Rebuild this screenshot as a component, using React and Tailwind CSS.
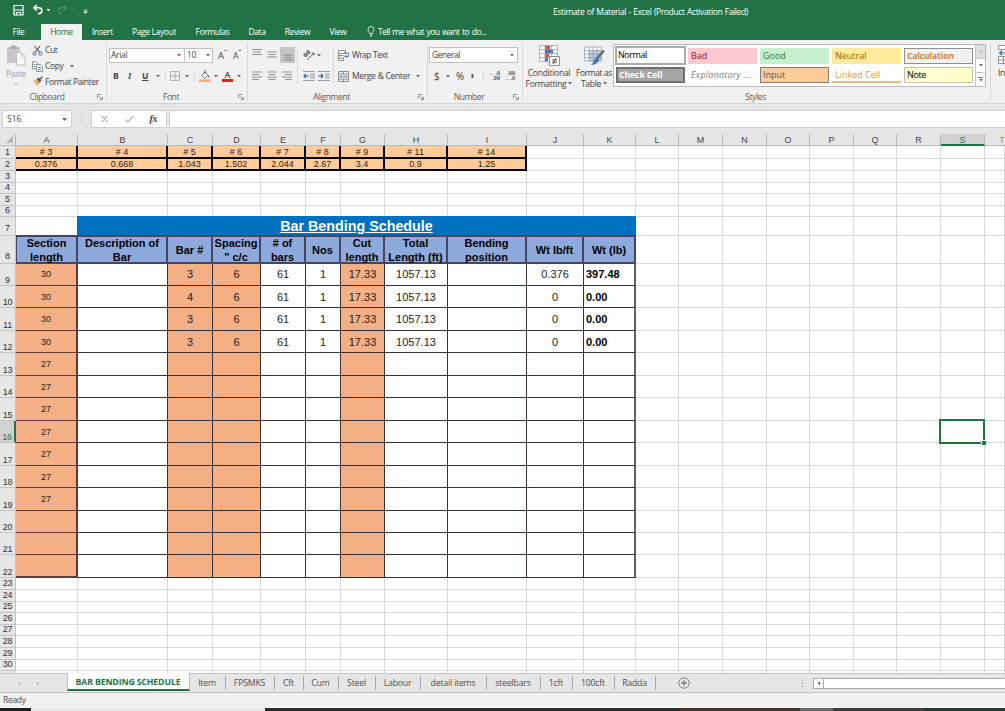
import React from "react";

const COLS =
  "grid grid-rows-[minmax(0,1fr)] grid-cols-[16px_62px_90px_45px_48px_45px_35px_44px_63px_79px_57px_52px_43px_44px_44px_43px_44px_43px_44px_44px_20px]";
const LETTERS = "ABCDEFGHIJKLMNOPQRST".split("");

const H = {
  11: "h-[11px]",
  12: "h-[12px]",
  13: "h-[13px]",
  19: "h-[19px]",
  22: "h-[22px]",
  23: "h-[23px]",
  28: "h-[28px]",
};
const HEIGHTS = [
  13, 12, 12, 11, 12, 11, 19, 28, 22, 22, 23, 22, 23, 22, 23, 22, 23, 22, 23,
  22, 22, 23, 12, 12, 11, 12, 11, 12, 12, 11,
];

const SIZES = ["# 3", "# 4", "# 5", "# 6", "# 7", "# 8", "# 9", "# 11", "# 14"];
const WEIGHTS = ["0.376", "0.668", "1.043", "1.502", "2.044", "2.67", "3.4", "0.9", "1.25"];
const HEADS = [
  ["Section", "length"],
  ["Description of", "Bar"],
  ["Bar #"],
  ["Spacing", "\" c/c"],
  ["# of", "bars"],
  ["Nos"],
  ["Cut", "length"],
  ["Total", "Length (ft)"],
  ["Bending", "position"],
  ["Wt lb/ft"],
  ["Wt (lb)"],
];
const DATA = {
  9: ["30", "", "3", "6", "61", "1", "17.33", "1057.13", "", "0.376", "397.48"],
  10: ["30", "", "4", "6", "61", "1", "17.33", "1057.13", "", "0", "0.00"],
  11: ["30", "", "3", "6", "61", "1", "17.33", "1057.13", "", "0", "0.00"],
  12: ["30", "", "3", "6", "61", "1", "17.33", "1057.13", "", "0", "0.00"],
};

function Caret({ className = "" }) {
  return (
    <svg viewBox="0 0 5 3" className={`h-[2.500px] w-[4px] shrink-0 text-[#666] ${className}`}>
      <path d="M0 0h5L2.5 3z" fill="currentColor" />
    </svg>
  );
}

function Launcher() {
  return (
    <svg viewBox="0 0 6 6" className="h-[6px] w-[6px] shrink-0" fill="none" stroke="#777" strokeWidth="0.8">
      <path d="M0.5 4V0.5H4M2.3 2.3L5 5M5.4 2.8v2.7H2.7" />
    </svg>
  );
}

function Group({ className, label, launcher = true, children }) {
  return (
    <div className={`flex shrink-0 flex-col ${className}`}>
      <div className="h-[51px]">{children}</div>
      <div className="grid h-[12px] grid-cols-[1fr_9px] items-center">
        <span
          className={`pr-[3px] text-center text-[8.500px] leading-[12px] tracking-[-0.38px] text-[#5c5c5c] ${launcher ? "" : "pl-[10px]"}`}
        >
          {label}
        </span>
        {launcher ? <Launcher /> : <span />}
      </div>
    </div>
  );
}

function Sep({ className = "" }) {
  return <div className={`w-px shrink-0 bg-[#d8d8d8] ${className}`} />;
}

function Lines({ rows, className = "" }) {
  return (
    <svg viewBox="0 0 10 10" className={`h-[10px] w-[10px] shrink-0 ${className}`} stroke="#858585" strokeWidth="0.9">
      {rows.map(([x1, x2, y]) => (
        <path key={y} d={`M${x1} ${y}H${x2}`} />
      ))}
    </svg>
  );
}

function Indent({ out }) {
  return (
    <svg viewBox="0 0 12 10" className="h-[10px] w-[12px] shrink-0" fill="none" stroke="#888" strokeWidth="0.8">
      <path d="M0 .5h12M7 3h5M7 5h5M7 7h5M0 9.5h12" />
      <path d={out ? "M6 5H1M3 3L1 5l2 2" : "M0 5h5M3 3l2 2-2 2"} stroke="#2b6da8" strokeWidth="1.2" />
    </svg>
  );
}

function TitleBar() {
  return (
    <div className="flex h-[24px] bg-[#217346] text-white">
      <svg viewBox="0 0 100 24" className="h-[24px] w-[100px] shrink-0" fill="none">
        <g stroke="#fff">
          <path d="M14 5.500h9v9.500h-9z" strokeWidth="1.200" />
          <path d="M14.500 10h8M16.500 15v-2.500h4V15" strokeWidth="1.200" />
          <path d="M36.800 5L34 7.800l2.800 2.800M34.300 7.800h4.600a2.900 2.900 0 0 1 0 5.800H38" strokeWidth="1.600" />
        </g>
        <path d="M46.500 9h4l-2 2.300z" fill="#fff" />
        <g stroke="#4b8a68">
          <path d="M63.500 5l2.800 2.800-2.800 2.800M66 7.800h-4.600a2.900 2.900 0 0 0 0 5.800h.8" strokeWidth="1.400" />
        </g>
        <path d="M70.500 9h3.600l-1.800 2z" fill="#4b8a68" />
        <path d="M83.500 10h4M83.800 11.800h3.400l-1.700 1.700z" stroke="#fff" strokeWidth="0.7" fill="#fff" />
      </svg>
      <div className="ml-[453px] text-[8.500px] leading-[24px] tracking-[-0.38px] [word-spacing:0.6px] whitespace-nowrap">
        Estimate of Material - Excel (Product Activation Failed)
      </div>
    </div>
  );
}

function RibbonTabs() {
  const tabs = [
    ["Insert", "w-[41px]"],
    ["Page Layout", "w-[62px]"],
    ["Formulas", "w-[55px]"],
    ["Data", "w-[34px]"],
    ["Review", "w-[47px]"],
    ["View", "w-[34px]"],
  ];
  return (
    <div className="flex h-[16px] bg-[#217346] text-center text-[8.500px] leading-[15px] tracking-[-0.36px] text-white">
      <div className="w-[41px] pr-[4px]">File</div>
      <div className="w-[41px] bg-[#f1f1f1] text-[#217346]">Home</div>
      {tabs.map(([t, w]) => (
        <div key={t} className={`whitespace-nowrap ${w}`}>
          {t}
        </div>
      ))}
      <svg viewBox="0 0 8 11" className="mt-[2px] ml-[12px] h-[11px] w-[8px]" fill="none" stroke="#fff" strokeWidth="0.8">
        <path d="M2.6 7.5C2.6 6 1 5.300 1 3.500a3 3 0 0 1 6 0C7 5.300 5.400 6 5.400 7.500zM2.700 9h2.600M3.200 10.300h1.600" />
      </svg>
      <div className="ml-[3px] tracking-[-0.48px] [word-spacing:0.7px] whitespace-nowrap">
        Tell me what you want to do...
      </div>
    </div>
  );
}

function Clipboard() {
  return (
    <Group className="w-[106px]" label="Clipboard">
      <div className="flex">
        <div className="flex w-[32px] flex-col items-center pt-[4px] text-[8.500px] tracking-[-0.3px] text-[#a0a0a0]">
          <svg viewBox="0 0 20 22" className="h-[22px] w-[20px]">
            <path d="M1 3h13v16H1z" fill="#c9c5cb" />
            <path d="M4 5V2.500h2a1.500 1.500 0 0 1 3 0h2V5z" fill="#aaa4ae" />
            <path d="M10.500 8.500h5l3.500 3.500v9h-8.500z" fill="#f7f7f7" stroke="#b5b5b5" strokeWidth="0.8" />
            <path d="M15.500 8.500V12H19" fill="none" stroke="#b5b5b5" strokeWidth="0.8" />
          </svg>
          <span className="leading-[15px]">Paste</span>
          <Caret className="mt-[2px] !text-[#c4c4c4]" />
        </div>
        <div className="flex flex-col pt-[2px] text-[8.500px] leading-[16px] tracking-[-0.4px] text-[#444]">
          <div className="flex h-[16px] items-center">
            <svg viewBox="0 0 11 11" className="mr-[2px] h-[11px] w-[11px]" fill="none">
              <path d="M2.500 1l5 6M8 1L3.500 7" stroke="#555" strokeWidth="1.1" />
              <circle cx="2.500" cy="8.500" r="1.600" stroke="#2b6da8" />
              <circle cx="8.500" cy="8.500" r="1.600" stroke="#2b6da8" />
            </svg>
            Cut
          </div>
          <div className="flex h-[16px] items-center">
            <svg viewBox="0 0 11 11" className="mr-[2px] h-[11px] w-[11px]" fill="#fff" stroke="#777" strokeWidth="0.8">
              <path d="M.5.8h3.500L6 2.800v5H.5z" />
              <path d="M4.500 3.500h3.800l2.200 2.200v4.800h-6z" />
              <path d="M1.500 3.500h2M1.500 5.500h2M6 6.500h3M6 8.500h3" stroke="#2b6da8" />
            </svg>
            Copy
            <Caret className="ml-[7px]" />
          </div>
          <div className="flex h-[15px] items-center whitespace-nowrap">
            <svg viewBox="0 0 11 11" className="mr-[2px] h-[11px] w-[11px]">
              <path d="M1 4.500l4-1 3 3L5.500 10z" fill="#e8b56a" />
              <path d="M4.500 3l2-1.500 3 3-1.800 2z" fill="#555" />
              <path d="M7.500 3.500L10.500.8" stroke="#555" strokeWidth="1.500" />
            </svg>
            Format Painter
          </div>
        </div>
      </div>
    </Group>
  );
}

function FontGroup() {
  return (
    <Group className="w-[140px]" label="Font">
      <div className="pt-[8px]">
        <div className="flex h-[15px] pl-[2px] text-[8.500px] tracking-[-0.3px] text-[#444]">
          <div className="flex w-[76px] items-center justify-between border border-[#c0c0c0] bg-white pr-[3px] pl-[1px]">
            Arial <Caret />
          </div>
          <div className="-ml-px flex w-[29px] items-center justify-between border border-[#c0c0c0] bg-white px-[2px]">
            10 <Caret />
          </div>
          <div className="ml-[5px] w-[15px] text-[9.500px] leading-[15px]">
            A<span className="align-top text-[7px] leading-[9px] font-bold">ˆ</span>
          </div>
          <div className="text-[8.500px] leading-[16px]">
            A<span className="align-top text-[7px] leading-[9px] font-bold">ˇ</span>
          </div>
        </div>
        <div className="mt-[6px] flex h-[14px] items-center pl-[6px] text-[8.500px] leading-[14px] text-[#444]">
          <b className="w-[15px]">B</b>
          <i className="w-[14px] font-['Liberation_Serif',serif] font-bold">I</i>
          <span className="w-[13px] font-bold underline">U</span>
          <Caret className="ml-px" />
          <Sep className="ml-[5px] h-[12px]" />
          <svg viewBox="0 0 10 10" className="ml-[4px] h-[10px] w-[10px]" fill="none" stroke="#999" strokeWidth="0.7">
            <path d="M.5.500h9v9h-9zM5 .5v9M.5 5h9" />
          </svg>
          <Caret className="ml-[5px]" />
          <Sep className="ml-[5px] h-[12px]" />
          <svg viewBox="0 0 12 12" className="ml-[4px] h-[12px] w-[12px]">
            <path d="M2.500 5.500L6 2l3 3.500L5.800 8.500z" fill="#fff" stroke="#666" strokeWidth="0.9" />
            <path d="M5 3.500V1.500a1 1 0 0 1 2 0v2" fill="none" stroke="#666" strokeWidth="0.7" />
            <path d="M9 5c1.500 1 1.500 2 1 3-.8-.5-1-1.500-1-3z" fill="#2b6da8" />
            <path d="M0 9.300h11.500V12H0z" fill="#f4b084" />
          </svg>
          <Caret className="ml-[3px]" />
          <div className="ml-[4px] flex w-[11px] flex-col items-center">
            <span className="h-[9px] text-[9px] leading-[9px] font-semibold">A</span>
            <span className="h-[3px] w-[11px] bg-[#e02020]" />
          </div>
          <Caret className="ml-[4px]" />
        </div>
      </div>
    </Group>
  );
}

function Alignment() {
  return (
    <Group className="w-[179px]" label="Alignment">
      <div className="flex pt-[5px]">
        <div className="flex w-[49px] flex-col">
          <div className="flex h-[20px] pl-[4px]">
            <Lines className="mt-[4px]" rows={[[0, 10, 0.5], [1.5, 8.5, 3], [0, 10, 5.5]]} />
            <Lines className="mt-[5px] ml-[5px]" rows={[[0, 10, 2], [1.5, 8.5, 4.5], [0, 10, 7]]} />
            <div className="mt-[2px] ml-[3px] flex h-[16px] w-[15px] items-end justify-center bg-[#c6c6c6]">
              <Lines className="mb-px" rows={[[0, 10, 3], [1.5, 8.5, 5.5], [0, 10, 8]]} />
            </div>
          </div>
          <div className="mt-[6px] flex gap-[5px] pl-[4px]">
            <Lines rows={[[0, 10, 1], [0, 7, 3.5], [0, 10, 6], [0, 7, 8.5]]} />
            <Lines rows={[[0, 10, 1], [1.5, 8.5, 3.5], [0, 10, 6], [1.5, 8.5, 8.5]]} />
            <Lines rows={[[0, 10, 1], [3, 10, 3.5], [0, 10, 6], [3, 10, 8.5]]} />
          </div>
        </div>
        <Sep className="mt-[3px] h-[35px]" />
        <div className="flex w-[35px] flex-col pl-[5px]">
          <div className="flex h-[20px] items-center">
            <svg viewBox="0 0 12 12" className="h-[12px] w-[12px]" fill="none" stroke="#555">
              <path d="M4 11l7-7M11 4H8.500M11 4v2.500" strokeWidth="0.9" />
              <circle cx="2.500" cy="6" r="1.500" />
              <circle cx="5" cy="3.500" r="1.500" />
              <path d="M3.500 7.300L2 5M6.500 4.800L4.500 1" />
            </svg>
            <Caret className="ml-[2px]" />
          </div>
          <div className="mt-[6px] flex gap-[3px]">
            <Indent out />
            <Indent />
          </div>
        </div>
        <Sep className="mt-[3px] h-[35px]" />
        <div className="flex flex-col pl-[4px] text-[8.500px] leading-[20px] text-[#444]">
          <div className="flex h-[20px] items-center tracking-[-0.6px] [word-spacing:0.6px] whitespace-nowrap">
            <svg viewBox="0 0 11 11" className="mr-[3px] h-[11px] w-[11px]" fill="none" stroke="#777" strokeWidth="0.8">
              <path d="M.5.500h7v3h-7zM.5 3.500v7h5v-3M.5 5.500h5M.5 8h5" />
              <path d="M6 3h4.500v3.500H7M8.500 5L7 6.500 8.500 8" stroke="#2b6da8" />
            </svg>
            Wrap Text
          </div>
          <div className="mt-[1px] flex h-[20px] items-center tracking-[-0.36px] [word-spacing:0.3px] whitespace-nowrap">
            <svg viewBox="0 0 11 11" className="mr-[3px] h-[11px] w-[11px]" fill="none" stroke="#777" strokeWidth="0.8">
              <path d="M.5.500h10v10H.5zM.5 3h10M.5 8h10M5.500.5V3M5.500 8v2.500" />
              <path d="M2 5.500h7M3.500 4.300L2 5.500l1.500 1.200M7.500 4.300L9 5.500 7.500 6.700" stroke="#2b6da8" strokeWidth="0.6" />
            </svg>
            Merge &amp; Center
            <Caret className="ml-[6px]" />
          </div>
        </div>
      </div>
    </Group>
  );
}

function NumberGroup() {
  return (
    <Group className="w-[94px]" label="Number">
      <div className="flex flex-col pt-[7px] pl-[1px] text-[8.500px] text-[#444]">
        <div className="flex h-[16px] w-[89px] items-center justify-between border border-[#c0c0c0] bg-white pr-[3px] pl-[2px] tracking-[-0.5px]">
          General <Caret />
        </div>
        <div className="mt-[6px] flex h-[14px] items-center text-[10px] leading-[14px]">
          <span className="w-[10px] pl-[5px]">$</span>
          <Caret className="ml-[7px]" />
          <span className="ml-[6px] w-[15px]">%</span>
          <svg viewBox="0 0 4 6" className="h-[5px] w-[3px]">
            <path d="M.5 0h3v3L1.500 6H.5l1-3h-1z" fill="#555" />
          </svg>
          <Sep className="ml-[9px] h-[12px]" />
          <div className="ml-[5px] flex gap-[4px]">
            <span className="grid w-[11px] grid-cols-[5px_6px] text-right font-['Liberation_Sans'] text-[5.500px] leading-[5px] font-bold">
              <span className="text-[#2b6da8]">←</span>
              <span>.0</span>
              <span className="col-span-2">.00</span>
            </span>
            <span className="grid w-[11px] grid-cols-[5px_6px] text-right font-['Liberation_Sans'] text-[5.500px] leading-[5px] font-bold">
              <span className="col-span-2">.00</span>
              <span className="text-[#2b6da8]">→</span>
              <span>.0</span>
            </span>
          </div>
        </div>
      </div>
    </Group>
  );
}

function Styles() {
  const base = "h-[16px] w-[69px] whitespace-nowrap px-[3px] leading-[15px]";
  return (
    <Group className="w-[467px]" label="Styles" launcher={false}>
      <div className="flex text-center text-[8.500px] leading-[11px] tracking-[-0.27px] text-[#444]">
        <div className="flex w-[52px] flex-col items-center pt-[5px]">
          <svg viewBox="0 0 21 21" className="mb-[1px] h-[21px] w-[21px]" fill="none">
            <path d="M.5.500h18v16H.5z" fill="#fff" />
            <path d="M6 .5h5v4H6zM6 8.500h4v4H6z" fill="#d9534a" />
            <path d="M6 4.500h8v4H6zM6 12.500h3v4H6z" fill="#3c78b5" />
            <path d="M.5.500h18v16H.5zM.5 4.500h18M.5 8.500h18M.5 12.500h18M6 .5v16M12.500.5v16" stroke="#9a9a9a" strokeWidth="0.7" />
            <path d="M10.500 11.500h10v9h-10z" fill="#fff" stroke="#777" strokeWidth="0.8" />
            <path d="M13 15h5M13 17.200h5M17 13l-3 6" stroke="#333" strokeWidth="0.8" />
          </svg>
          <span>Conditional</span>
          <span className="flex items-center gap-[2px]">
            Formatting <Caret />
          </span>
        </div>
        <div className="flex w-[38px] flex-col items-center pt-[5px] whitespace-nowrap">
          <svg viewBox="0 0 21 21" className="mb-[1px] h-[21px] w-[21px]" fill="none">
            <path d="M.5 2h17v14H.5z" fill="#fff" />
            <path d="M5 5.500h12.500V16H5z" fill="#b9d0e8" />
            <path d="M.5 2h17v14H.5zM.5 5.500h17M.5 9h17M.5 12.500h17M5 2v14M9 2v14M13 2v14" stroke="#8a97a8" strokeWidth="0.7" />
            <path d="M20 5.500l-7 8" stroke="#666" strokeWidth="2.400" />
            <path d="M13.500 12c2 1 2 3 .5 5-1.500 2-4 3-7 3 2-1.500 2-3 3-5s2-2.500 3.500-3z" fill="#3c78b5" />
          </svg>
          <span className="tracking-[-0.4px]">Format as</span>
          <span className="flex items-center gap-[2px]">
            Table <Caret />
          </span>
        </div>
        <div className="mt-[4px] flex h-[43px] w-[373px] border border-[#b8b8b8] bg-white text-left text-[9px] tracking-[0px]">
          <div className="grid w-[361px] shrink-0 grid-cols-[72px_72px_72px_72px_69px] grid-rows-[16px_16px] gap-y-[3px] pt-[3px] pl-[2px]">
            <div className="-mt-[2px] -ml-[1px] h-[19px] w-[71px] border-2 border-[#ababab] px-[1px] leading-[14px] tracking-[-0.45px] text-black">
              Normal
            </div>
            <div className={`${base} bg-[#ffc7ce] text-[#9c1020]`}>Bad</div>
            <div className={`${base} bg-[#c6efce] text-[#2a7a2a]`}>Good</div>
            <div className={`${base} bg-[#ffeb9c] text-[#9c6500]`}>Neutral</div>
            <div className="h-[16px] w-[69px] border border-[#8f8f8f] bg-[#f2f2f2] px-[2px] text-[8.500px] leading-[14px] font-bold tracking-[-0.1px] text-[#dd7e2b]">
              Calculation
            </div>
            <div className="h-[16px] w-[69px] border-2 border-[#707070] bg-[#a5a5a5] px-[1px] text-[8.500px] leading-[12px] font-bold tracking-[0px] text-white">
              Check Cell
            </div>
            <div className={`${base} tracking-[0.22px] text-[#7f7f7f] italic`}>Explanatory ...</div>
            <div className="h-[16px] w-[69px] border border-[#7f7f7f] bg-[#ffcc99] px-[2px] leading-[14px] text-[#5f5560]">
              Input
            </div>
            <div className="h-[16px] w-[69px] border-b-2 border-[#e3bc82] px-[3px] leading-[15px] text-[#e09a45]">
              Linked Cell
            </div>
            <div className="h-[16px] w-[69px] border border-[#c2c2b0] bg-[#ffffcc] px-[2px] leading-[14px] tracking-[-0.4px] text-black">
              Note
            </div>
          </div>
          <div className="flex flex-1 flex-col divide-y divide-[#c6c6c6] border-l border-[#c6c6c6]">
            <div className="flex flex-1 items-center justify-center bg-[#e0e0e0]">
              <Caret className="rotate-180 !text-[#aaa]" />
            </div>
            <div className="flex flex-1 items-center justify-center">
              <Caret />
            </div>
            <div className="flex flex-1 flex-col items-center justify-center gap-px">
              <div className="h-px w-[5px] bg-[#777]" />
              <Caret />
            </div>
          </div>
        </div>
      </div>
    </Group>
  );
}

function Ribbon() {
  return (
    <div className="flex h-[64px] w-full overflow-hidden border-b border-[#d2d2d2] bg-[#f1f1f1]">
      <Clipboard />
      <Sep className="my-[3px]" />
      <FontGroup />
      <Sep className="my-[3px]" />
      <Alignment />
      <Sep className="my-[3px]" />
      <NumberGroup />
      <Sep className="my-[3px]" />
      <Styles />
      <Sep className="my-[3px]" />
      <div className="w-[14px] pt-[5px] pl-[7px] text-[8.500px] leading-[14px] tracking-[-0.4px] whitespace-nowrap text-[#444]">
        <svg viewBox="0 0 7 19" className="mb-[2px] h-[19px] w-[7px]" fill="#fff" stroke="#777" strokeWidth="0.8">
          <path d="M.5.500H8v4H.5zM.5 11.500H8v7H.5zM.5 15H8M5.500 11.500v7" />
          <path d="M7 8H1.500M4 5.800L1.500 8 4 10.200" fill="none" stroke="#2b6da8" strokeWidth="1.200" />
        </svg>
        In
      </div>
    </div>
  );
}

function FormulaBar() {
  return (
    <div className="flex h-[30px] items-start bg-[#e6e6e6] pt-[6px] pl-[2px]">
      <div className="flex h-[18px] w-[70px] items-center justify-between border border-[#d0d0d0] bg-white pr-[4px] pl-[4px] text-[8.500px] text-[#444]">
        S16 <Caret className="!h-[3px] !w-[5px]" />
      </div>
      <div className="mt-[5px] ml-[9px] flex flex-col gap-[2px]">
        <i className="h-px w-px bg-[#999]" />
        <i className="h-px w-px bg-[#999]" />
        <i className="h-px w-px bg-[#999]" />
      </div>
      <div className="ml-[9px] flex h-[18px] w-[76px] items-center border border-[#d0d0d0] bg-white">
        <svg viewBox="0 0 74 16" className="h-[16px] w-[74px]" fill="none" stroke="#b5b5b5" strokeWidth="1.200">
          <path d="M9.500 5l6 6M15.500 5l-6 6M33.500 8.500l2.500 2.500 5.500-6" />
          <text x="57.500" y="11" fill="#444" stroke="none" fontFamily="Liberation Serif" fontStyle="italic" fontWeight="bold" fontSize="10" letterSpacing="-0.4">
            fx
          </text>
        </svg>
      </div>
      <div className="ml-[2px] h-[18px] flex-1 border border-r-0 border-[#d0d0d0] bg-white" />
    </div>
  );
}

function HeaderRow() {
  return (
    <div className={`${COLS} h-[12px] shrink-0 bg-[#e6e6e6] text-center text-[9px] leading-[13px] text-[#444]`}>
      <div className="flex items-end justify-end border-r border-b border-[#b8b8b8] pr-[2px] pb-[2px]">
        <svg viewBox="0 0 7 7" className="h-[7px] w-[7px]">
          <path d="M7 0v7H0z" fill="#b8b8b8" />
        </svg>
      </div>
      {LETTERS.map((l) => (
        <div
          key={l}
          className={
            l === "S"
              ? "border-r border-b-2 border-[#217346] border-r-[#b8b8b8] bg-[#d2d2d2] text-[#217346]"
              : l === "T"
                ? "border-b border-[#b8b8b8] pl-[14px] text-[#b98a2e]"
                : "border-r border-b border-[#b8b8b8]"
          }
        >
          {l}
        </div>
      ))}
    </div>
  );
}

function tableCell(r, c) {
  if (c > 10) return null;
  if (r <= 2 && c <= 8)
    return {
      cls: `border-r-2 border-b-2 border-black bg-[#ffcc99] text-[9px] text-[#332211] ${r === 1 ? "leading-[12px]" : "leading-[11px]"}`,
      body: (r === 1 ? SIZES : WEIGHTS)[c],
    };
  if (r === 8)
    return {
      cls: `-mt-px flex flex-col justify-center border-t-2 border-b-2 border-r-2 border-[#454560] bg-[#8ea9db] text-[11px] leading-[14px] font-bold text-black ${c === 0 ? "border-l" : ""}`,
      body: HEADS[c].map((t) => (
        <span key={t} className="-mx-2 block whitespace-nowrap">
          {t}
        </span>
      )),
    };
  if (r >= 9 && r <= 22) {
    const orange = c === 0 || c === 2 || c === 3 || c === 6;
    const edge =
      c === 0
        ? "border-r-2 border-[#5c3d3a] text-[9px]"
        : c === 10
          ? "border-r-2 border-b-[#333] border-r-[#5f5f66] text-left pl-[2px] font-bold text-[11px] text-black"
          : "border-r border-[#3a3030] text-[11px]";
    const row = DATA[r];
    return {
      cls: `border-b ${edge} ${orange ? "bg-[#f4b084]" : "bg-white"} ${c === 0 && r === 22 ? "border-b-2" : ""} ${r === 9 ? "leading-[21px]" : "leading-[23px]"} text-[#222]`,
      body: row ? row[c] : c === 0 && r <= 19 ? "27" : "",
    };
  }
  return null;
}

function Sheet() {
  return (
    <div className="relative flex h-[539px] flex-col overflow-hidden bg-white font-['Liberation_Sans',sans-serif]">
      <HeaderRow />
      {HEIGHTS.map((h, i) => {
        const r = i + 1;
        return (
          <div key={r} className={`${COLS} ${H[h]} shrink-0 text-center`}>
            <div
              className={`flex items-end justify-center border-r border-b text-[9px] leading-[9px] tracking-[-0.2px] ${
                r === 7 || r === 8 ? "pb-[2px]" : r >= 9 && r <= 22 ? "pb-0" : "pb-px"
              } ${
                r === 16
                  ? "border-r-2 border-b-[#c4c4c4] border-r-[#217346] bg-[#d2d2d2] text-[#217346]"
                  : "border-[#c4c4c4] bg-[#e6e6e6] text-[#333]"
              }`}
            >
              {r}
            </div>
            {r === 7 ? (
              <>
                <div className="border-b border-[#d9d9d9]" />
                <div className="col-[3/13] -mt-px -ml-px overflow-hidden bg-[#0070c0] text-[14.300px] leading-[21px] font-bold text-white underline">
                  Bar Bending Schedule
                </div>
                {LETTERS.slice(11).map((l) => (
                  <div key={l} className="border-r border-b border-[#d9d9d9]" />
                ))}
              </>
            ) : (
              LETTERS.map((l, c) => {
                const cell = tableCell(r, c);
                return (
                  <div key={l} className={cell ? cell.cls : "border-r border-b border-[#d9d9d9]"}>
                    {cell && cell.body}
                  </div>
                );
              })
            )}
          </div>
        );
      })}
      <div className={`${COLS} h-[3px] shrink-0`}>
        <div className="bg-[#e6e6e6]" />
        {LETTERS.map((l) => (
          <div key={l} className="border-r border-[#d9d9d9]" />
        ))}
      </div>
      <div className="absolute top-[285px] left-[939px] h-[25px] w-[46px] border-2 border-[#217346]">
        <div className="absolute -right-[3px] -bottom-[3px] h-[5px] w-[5px] border-t border-l border-white bg-[#217346]" />
      </div>
    </div>
  );
}

function SheetTabs() {
  const tabs = [
    ["Item", "w-[36px]"],
    ["FPSMKS", "w-[49px]"],
    ["Cft", "w-[29px]"],
    ["Cum", "w-[35px]"],
    ["Steel", "w-[37px]"],
    ["Labour", "w-[45px]"],
    ["detail items", "w-[66px]"],
    ["steelbars", "w-[54px]"],
    ["1cft", "w-[32px]"],
    ["100cft", "w-[42px]"],
    ["Radda", "w-[41px]"],
  ];
  return (
    <div className="flex h-[20px] border-t border-b border-[#c3c3c3] bg-[#e6e6e6] text-center text-[8.750px] leading-[18px] tracking-[-0.22px] text-[#505050]">
      <div className="flex w-[67px] items-center gap-[15px] pl-[17px]">
        <Caret className="rotate-90 !text-[#b0b0b0]" />
        <Caret className="-rotate-90 !text-[#b0b0b0]" />
      </div>
      <div className="-mt-px h-[18px] w-[123px] border-x border-b-2 border-[#bdbdbd] border-b-[#217346] bg-white pr-px text-[8.750px] leading-[19px] font-bold tracking-[-0.15px] whitespace-nowrap text-[#217346]">
        BAR BENDING SCHEDULE
      </div>
      {tabs.map(([t, w]) => (
        <div key={t} className={`relative pr-[2px] whitespace-nowrap ${w}`}>
          {t}
          <span className="absolute top-[2px] right-0 h-[14px] w-px bg-[#a8a8a8]" />
        </div>
      ))}
      <svg viewBox="0 0 12 12" className="mt-[3px] ml-[22px] h-[12px] w-[12px]" fill="none" stroke="#777">
        <circle cx="6" cy="6" r="5.200" strokeWidth="0.9" />
        <path d="M3.200 6h5.600M6 3.200v5.600" strokeWidth="1.400" />
      </svg>
      <div className="mt-[6px] ml-[112px] flex w-px flex-col gap-[2px]">
        <i className="h-px w-px bg-[#999]" />
        <i className="h-px w-px bg-[#999]" />
        <i className="h-px w-px bg-[#999]" />
      </div>
      <div className="mt-[4px] ml-[10px] flex h-[11px] flex-1 border border-r-0 border-[#ababab] bg-white">
        <div className="flex w-[10px] items-center justify-center border-r border-[#ababab]">
          <Caret className="rotate-90 !text-[#444]" />
        </div>
      </div>
    </div>
  );
}

export default function App() {
  return (
    <div className="flex h-[711px] w-[1005px] flex-col overflow-hidden bg-[#e6e6e6] font-['Open_Sans','Noto_Sans',sans-serif]">
      <TitleBar />
      <RibbonTabs />
      <Ribbon />
      <FormulaBar />
      <Sheet />
      <SheetTabs />
      <div className="h-[14px] bg-[#f1f1f1] pl-[3px] text-[8.500px] leading-[14px] tracking-[-0.3px] text-[#505050]">Ready</div>
      <div className="flex h-[4px] border-t border-[#f8f8f8]">
        <div className="w-[31px] bg-[#1f1f18]" />
        <div className="w-[234px] bg-[#e8e8e8]" />
        <div className="w-[415px] bg-[#2b2a26]" />
        <div className="w-[120px] bg-[#4a332d]" />
        <div className="w-[33px] bg-[#6b6868]" />
        <div className="w-[92px] bg-[#3d3d3f]" />
        <div className="flex-1 bg-[#1f3a35]" />
      </div>
    </div>
  );
}
